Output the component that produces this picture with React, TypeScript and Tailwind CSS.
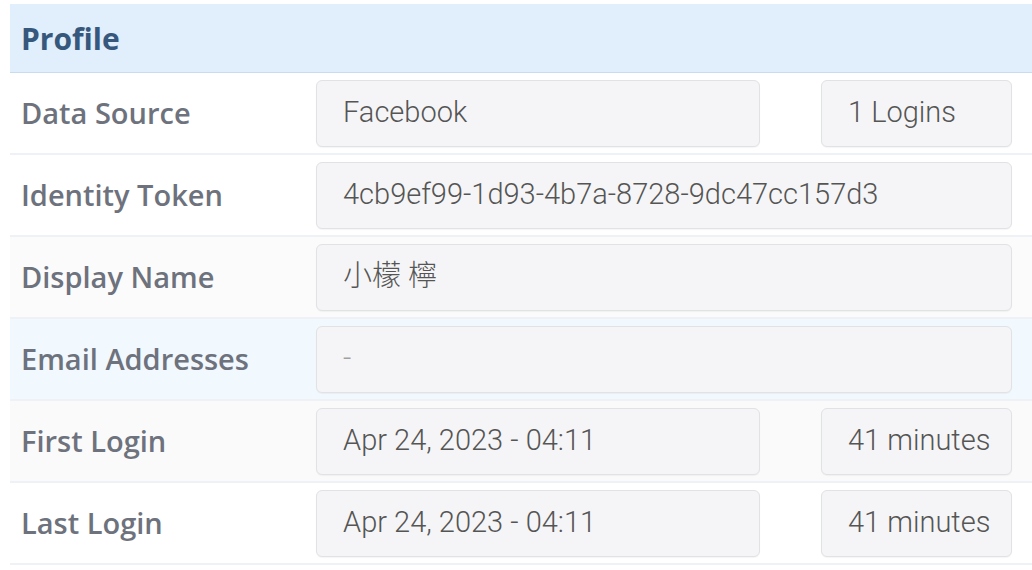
import React from 'react';

type Row = {
  label: string;
  value: string;
  extra?: string;
  bg: string;
  muted?: boolean;
};

const rows: Row[] = [
  { label: 'Data Source', value: 'Facebook', extra: '1 Logins', bg: 'bg-white' },
  { label: 'Identity Token', value: '4cb9ef99-1d93-4b7a-8728-9dc47cc157d3', bg: 'bg-white' },
  { label: 'Display Name', value: '小檬 檸', bg: 'bg-[#fbfbfc]' },
  { label: 'Email Addresses', value: '-', bg: 'bg-[#f1f8fe]', muted: true },
  { label: 'First Login', value: 'Apr 24, 2023 - 04:11', extra: '41 minutes', bg: 'bg-[#fafafa]' },
  { label: 'Last Login', value: 'Apr 24, 2023 - 04:11', extra: '41 minutes', bg: 'bg-white' },
];

const Field = ({ text, className, muted }: { text: string; className: string; muted?: boolean }) => (
  <div
    className={`h-[67px] flex items-center pl-[26px] pb-[2px] rounded-[6px] border border-[#e1e2e4] bg-[#f5f5f7] shadow-[0_1px_1px_rgba(0,0,0,0.04)] text-[29px] font-light whitespace-nowrap ${muted ? 'text-[#a0a0a0]' : 'text-[#555555]'} ${className}`}
    style={{ fontFamily: 'Roboto, "Noto Sans CJK TC", sans-serif' }}
  >
    {text}
  </div>
);

export default function App() {
  return (
    <div className="w-[1032px] h-[570px] bg-white overflow-hidden pt-[4px] pl-[10px]">
      <div className="w-[1022px]" style={{ fontFamily: '"Open Sans", "Noto Sans", sans-serif' }}>
        {/* Header */}
        <div className="h-[69px] bg-[#e1eefb] border-b-[1px] border-[#c7dcef] flex items-center pl-[11px]">
          <h2 className="text-[30px] font-bold text-[#36587c]">Profile</h2>
        </div>

        {rows.map((r) => (
          <div key={r.label} className={`h-[82px] flex border-b-[2px] border-[#eef1f5] ${r.bg}`}>
            <div className="w-[298px] pl-[11px] flex items-center text-[29px] font-semibold text-[#6d727d]">
              {r.label}
            </div>
            <div className="flex-1 flex gap-[61px] pt-[7px] pl-[8px] pr-[20px]">
              <Field text={r.value} muted={r.muted} className={r.extra ? 'w-[444px]' : 'flex-1'} />
              {r.extra && <Field text={r.extra} className="w-[191px]" />}
            </div>
          </div>
        ))}
      </div>
    </div>
  );
}
